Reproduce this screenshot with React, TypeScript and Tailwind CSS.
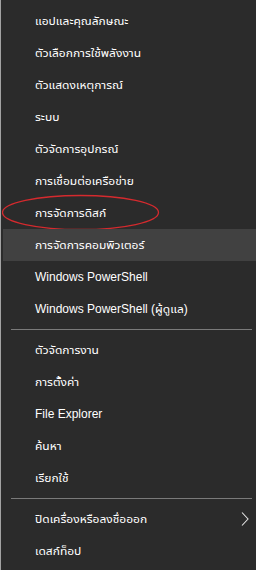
import React from "react";

type Item = { label: string; active?: boolean; circled?: boolean; submenu?: boolean };

const groups: Item[][] = [
  [
    { label: "แอปและคุณลักษณะ" },
    { label: "ตัวเลือกการใช้พลังงาน" },
    { label: "ตัวแสดงเหตุการณ์" },
    { label: "ระบบ" },
    { label: "ตัวจัดการอุปกรณ์" },
    { label: "การเชื่อมต่อเครือข่าย" },
    { label: "การจัดการดิสก์", circled: true },
    { label: "การจัดการคอมพิวเตอร์", active: true },
    { label: "Windows PowerShell" },
    { label: "Windows PowerShell (ผู้ดูแล)" },
  ],
  [
    { label: "ตัวจัดการงาน" },
    { label: "การตั้งค่า" },
    { label: "File Explorer" },
    { label: "ค้นหา" },
    { label: "เรียกใช้" },
  ],
  [{ label: "ปิดเครื่องหรือลงชื่อออก", submenu: true }, { label: "เดสก์ท็อป" }],
];

function Chevron() {
  return (
    <svg width="8" height="14" viewBox="0 0 8 14" className="block">
      <path d="M1 0.5 L7 7 L1 13.5" fill="none" stroke="#e6e6e6" strokeWidth="1.1" />
    </svg>
  );
}

function MenuRow({ item }: { item: Item }) {
  return (
    <div
      className={`relative h-[32px] flex items-center justify-between pl-[32px] pr-[7px] ${
        item.active ? "bg-[#414141]" : ""
      }`}
    >
      <span className="whitespace-nowrap">{item.label}</span>
      {item.submenu && <Chevron />}
      {item.circled && (
        <svg
          className="absolute left-[-1px] top-[-8px] pointer-events-none"
          width="160"
          height="44"
          viewBox="0 0 160 44"
        >
          <ellipse cx="78.5" cy="23.5" rx="78" ry="17" fill="none" stroke="#d52a2e" strokeWidth="1.3" />
        </svg>
      )}
    </div>
  );
}

export default function App() {
  return (
    <div className="w-[256px] h-[570px] bg-[#2b2b2b] border-l border-[#a3a3a3] pl-[2px] pt-[5px] flex flex-col overflow-hidden text-[12px] text-white font-['Liberation_Sans','Noto_Sans_Thai_UI','Noto_Sans_Thai',sans-serif]">
      {groups.map((group, gi) => (
        <div key={gi} className="flex flex-col">
          {gi > 0 && (
            <div className="h-[9px] flex items-center pl-[8px] pr-[4px]">
              <div className="h-px w-full bg-[#7a7a7a]" />
            </div>
          )}
          {group.map((item) => (
            <MenuRow key={item.label} item={item} />
          ))}
        </div>
      ))}
    </div>
  );
}
